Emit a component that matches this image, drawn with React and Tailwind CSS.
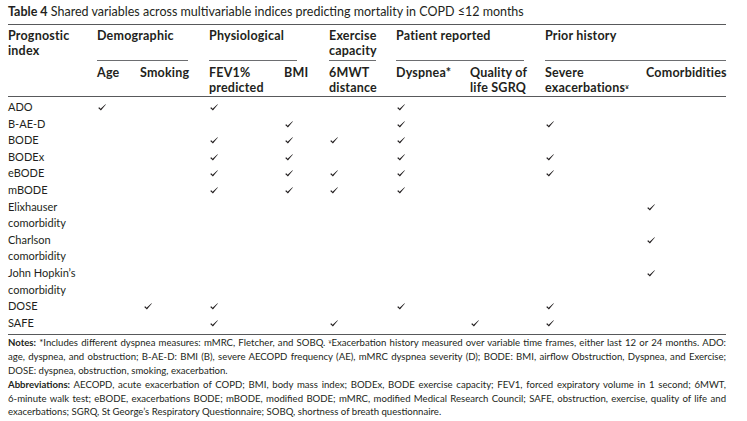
const font = { fontFamily: "Lato, 'Open Sans', 'Liberation Sans', sans-serif" };

const cols = "grid grid-cols-[89px_43px_69px_75px_45px_67px_74px_75px_101px_80px]";

const rows = [
  { name: ["ADO"], checks: [1, 3, 6] },
  { name: ["B-AE-D"], checks: [4, 6, 8] },
  { name: ["BODE"], checks: [3, 4, 5, 6] },
  { name: ["BODEx"], checks: [3, 4, 6, 8] },
  { name: ["eBODE"], checks: [3, 4, 5, 6, 8] },
  { name: ["mBODE"], checks: [3, 4, 5, 6] },
  { name: ["Elixhauser", "comorbidity"], checks: [9] },
  { name: ["Charlson", "comorbidity"], checks: [9] },
  { name: ["John Hopkin\u2019s", "comorbidity"], checks: [9] },
  { name: ["DOSE"], checks: [2, 3, 6, 8] },
  { name: ["SAFE"], checks: [3, 5, 7, 8] },
];

const Check = ({ shift }) => (
  <svg
    width="8"
    height="7"
    viewBox="0 0 8 7"
    className={`mt-[5px] ${shift ? "ml-[4px]" : "ml-[1px]"}`}
  >
    <path d="M0.2 3.9 L1.3 3.2 L2.6 4.7 L7.5 0.2 L7.9 0.5 L2.9 6.6 Z" fill="#231f20" />
  </svg>
);

const GroupHead = ({ span, mr, children }) => (
  <div className={`${span} ${mr} flex flex-col justify-between border-b border-[#6d6e71]`}>
    <div className="pt-[4px] leading-[14.5px]">{children}</div>
  </div>
);

// justified line, like the printed notes
const Line = ({ last, children }) => (
  <div className={last ? "" : "text-justify [text-align-last:justify]"}>{children}</div>
);

export default function App() {
  return (
    <div className="bg-white w-[747px] h-[421px] overflow-hidden text-[#231f20]" style={font}>
      <div className="w-[718px] ml-[8px]">
        {/* Title */}
        <div className="text-[12.5px] leading-[14px] pt-[5px] pb-[5px]">
          <span className="font-bold">Table 4</span> Shared variables across multivariable indices
          predicting mortality in COPD {"\u2264"}12 months
        </div>

        {/* Header */}
        <div className="border-t-[1.5px] border-b border-[#58595b] text-[12.5px] font-bold tracking-[0.2px]">
          <div className={`${cols} h-[36px]`}>
            <div className="pt-[4px] leading-[14.5px]">
              Prognostic
              <br />
              index
            </div>
            <GroupHead span="col-span-2" mr="mr-[21px]">Demographic</GroupHead>
            <GroupHead span="col-span-2" mr="mr-[32px]">Physiological</GroupHead>
            <GroupHead span="col-span-1" mr="mr-[20px]">
              Exercise
              <br />
              capacity
            </GroupHead>
            <GroupHead span="col-span-2" mr="mr-[21px]">Patient reported</GroupHead>
            <GroupHead span="col-span-2" mr="mr-0">Prior history</GroupHead>
          </div>
          <div className={`${cols} h-[35px] pt-[4px] leading-[15px]`}>
            <div />
            <div>Age</div>
            <div>Smoking</div>
            <div>
              FEV1%
              <br />
              predicted
            </div>
            <div>BMI</div>
            <div>
              6MWT
              <br />
              distance
            </div>
            <div>Dyspnea*</div>
            <div>
              Quality of
              <br />
              life SGRQ
            </div>
            <div className="whitespace-nowrap">
              Severe
              <br />
              exacerbations<sup className="text-[6px] font-bold">¥</sup>
            </div>
            <div>Comorbidities</div>
          </div>
        </div>

        {/* Body */}
        <div className="border-b-[1.5px] border-[#58595b] pt-[2px] pb-[3px] text-[11px] leading-[16.6px]">
          {rows.map((r) => (
            <div key={r.name.join(" ")} className={cols}>
              <div>
                {r.name.map((n, i) => (
                  <div key={i}>{n}</div>
                ))}
              </div>
              {[1, 2, 3, 4, 5, 6, 7, 8, 9].map((c) => (
                <div key={c}>{r.checks.includes(c) && <Check shift={c === 2} />}</div>
              ))}
            </div>
          ))}
        </div>

        {/* Notes */}
        <div className="pt-[1px] text-[9.6px] leading-[13.8px] whitespace-nowrap">
          <Line>
            <span className="font-bold">Notes:</span> *Includes different dyspnea measures: mMRC,
            Fletcher, and SOBQ. <sup className="text-[5px]">¥</sup>Exacerbation history measured over
            variable time frames, either last 12 or 24 months. ADO:
          </Line>
          <Line>
            age, dyspnea, and obstruction; B-AE-D: BMI (B), severe AECOPD frequency (AE), mMRC dyspnea
            severity (D); BODE: BMI, airflow Obstruction, Dyspnea, and Exercise;
          </Line>
          <Line last>DOSE: dyspnea, obstruction, smoking, exacerbation.</Line>
          <Line>
            <span className="font-bold">Abbreviations:</span> AECOPD, acute exacerbation of COPD; BMI,
            body mass index; BODEx, BODE exercise capacity; FEV1, forced expiratory volume in 1 second;
            6MWT,
          </Line>
          <Line>
            6-minute walk test; eBODE, exacerbations BODE; mBODE, modified BODE; mMRC, modified Medical
            Research Council; SAFE, obstruction, exercise, quality of life and
          </Line>
          <Line last>
            exacerbations; SGRQ, St George{"\u2019"}s Respiratory Questionnaire; SOBQ, shortness of
            breath questionnaire.
          </Line>
        </div>
      </div>
    </div>
  );
}
